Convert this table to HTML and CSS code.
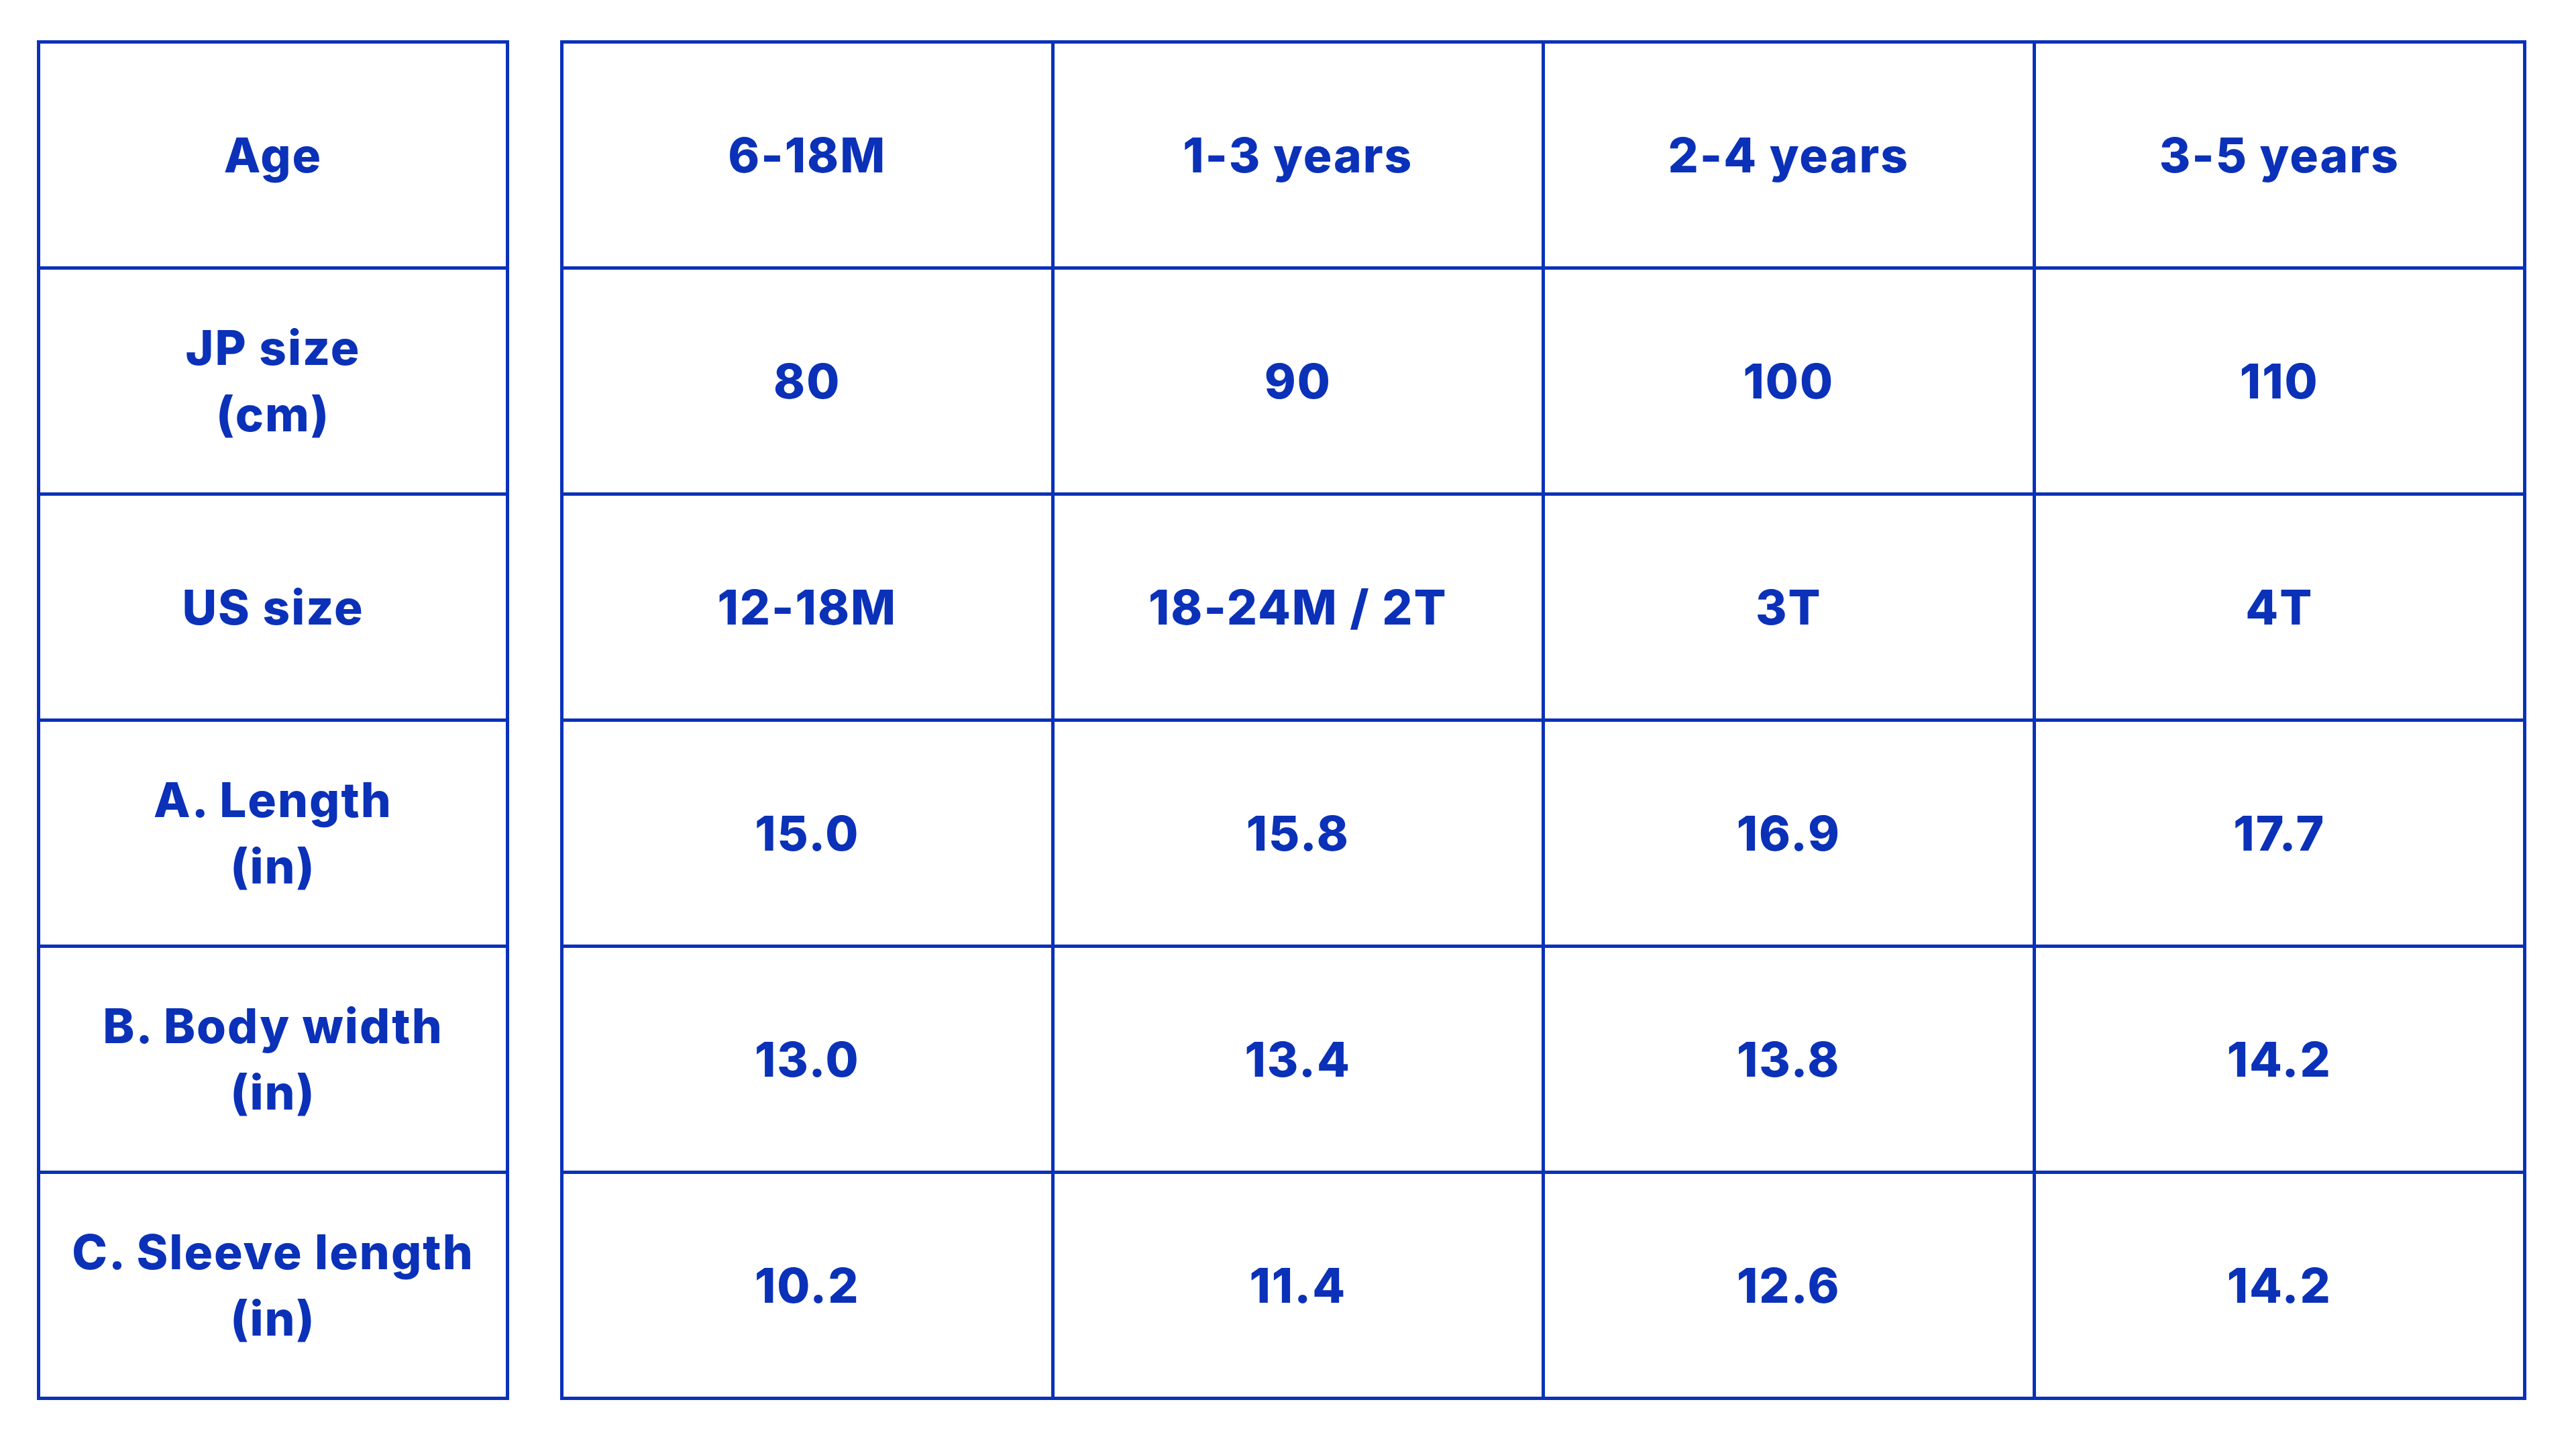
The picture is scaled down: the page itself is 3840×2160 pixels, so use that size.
FILE: index.html
```html
<!DOCTYPE html>
<html lang="en">
<head>
<meta charset="utf-8">
<title>Size chart</title>
<link rel="stylesheet" href="styles.css">
</head>
<body>
<main class="page">
  <div class="grid grid-labels">
    <div class="cell">Age</div>
    <div class="cell">JP size<br>(cm)</div>
    <div class="cell">US size</div>
    <div class="cell">A. Length<br>(in)</div>
    <div class="cell">B. Body width<br>(in)</div>
    <div class="cell">C. Sleeve length<br>(in)</div>
  </div>
  <div class="grid grid-values">
    <div class="cell">6-18M</div>
    <div class="cell">1-3 years</div>
    <div class="cell">2-4 years</div>
    <div class="cell">3-5 years</div>

    <div class="cell">80</div>
    <div class="cell">90</div>
    <div class="cell">100</div>
    <div class="cell">110</div>

    <div class="cell">12-18M</div>
    <div class="cell">18-24M / 2T</div>
    <div class="cell">3T</div>
    <div class="cell">4T</div>

    <div class="cell">15.0</div>
    <div class="cell">15.8</div>
    <div class="cell">16.9</div>
    <div class="cell">17.7</div>

    <div class="cell">13.0</div>
    <div class="cell">13.4</div>
    <div class="cell">13.8</div>
    <div class="cell">14.2</div>

    <div class="cell">10.2</div>
    <div class="cell">11.4</div>
    <div class="cell">12.6</div>
    <div class="cell">14.2</div>
  </div>
</main>
</body>
</html>
```
FILE: styles.css
```css
html, body {
  margin: 0;
  padding: 0;
  background: #ffffff;
}

body {
  width: 3840px;
  height: 2160px;
  overflow: hidden;
  font-family: "Inter", "Open Sans", "DejaVu Sans", sans-serif;
  color: #0a31b8;
}

.page {
  display: flex;
  align-items: flex-start;
  gap: 76px;
  padding: 60px 0 0 55px;
}

.grid {
  display: grid;
  gap: 5px;
  padding: 5px;
  background: #0a31b8;
  grid-auto-rows: 332px;
}

.grid-labels {
  width: 704px;
  box-sizing: border-box;
  grid-template-columns: 1fr;
}

.grid-values {
  width: 2931px;
  box-sizing: border-box;
  grid-template-columns: repeat(4, 1fr);
}

.cell {
  background: #ffffff;
  display: flex;
  align-items: center;
  justify-content: center;
  text-align: center;
  font-size: 71px;
  font-weight: 800;
  line-height: 99px;
  letter-spacing: 2px;
}
```
